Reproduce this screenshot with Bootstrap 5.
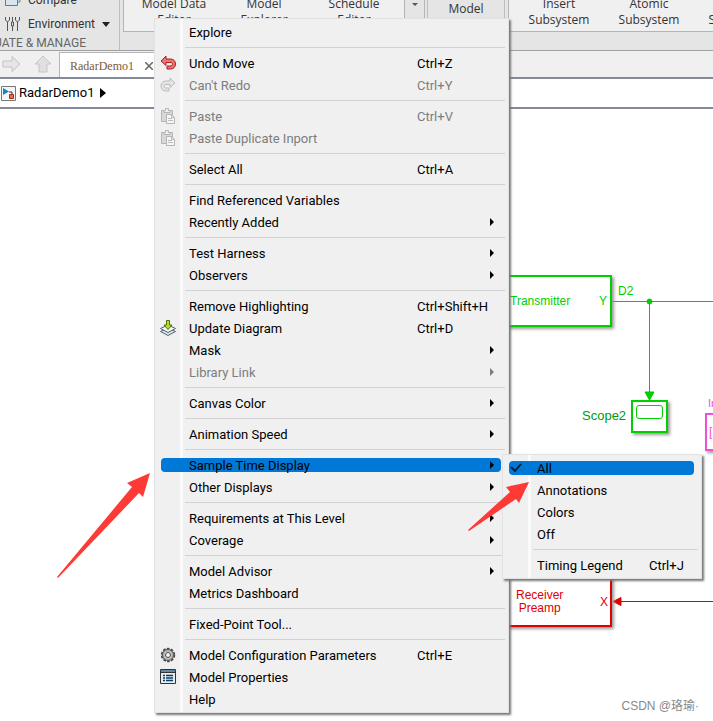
<!DOCTYPE html>
<html lang="en">
<head>
<meta charset="utf-8">
<meta name="viewport" content="width=device-width, initial-scale=1">
<title>RadarDemo1</title>
<link href="https://cdn.jsdelivr.net/npm/bootstrap@5.3.0/dist/css/bootstrap.min.css" rel="stylesheet">
<style>
body{font:13px/22px Roboto,"Open Sans",sans-serif;color:#000;background:#fff}
button{font:inherit;color:inherit;border:0;background:none;padding:0}
/* ribbon */
.ribbon{height:51px;background:#e5e5e5;border-bottom:1px solid #a0a0a0;font:12px/16px "Open Sans",sans-serif;color:#333}
.manage{width:120px;border-right:1px solid #bdbdbd}
.tool-row{height:24px;gap:7px}
.tool-label{font:12px/16px Roboto,sans-serif}
.group-title{height:14px;font:12px/14px Roboto,sans-serif;color:#666;padding-right:33px}
.gallery{height:32px;background:#f0f0f0;border:1px solid #b4b4b4;border-top:0}
.gallery button{width:90px;height:24px;white-space:nowrap}
.gallery.first{margin-left:3px;padding-left:5px}
.gallery .scroller{width:20px;height:31px;margin-left:5px;background:#e5e5e5;border-left:1px solid #b4b4b4}
.gallery .stacked{margin-top:-4px;height:32px}
.model-cell{width:78px;height:32px;margin-left:2px;border:1px solid #bdbdbd;border-top:0;border-bottom:0;padding-bottom:15px}
.gallery.second{margin-left:3px;padding-left:5px;border-right:0}
/* document tabs and path */
.tabs-bar{height:28px;background:#f0f0f0;border-bottom:2px solid #858b94}
.nav-icons{width:59px;gap:12px;padding-left:2px}
.doc-tab{width:110px;height:25px;gap:11px;background:#fff;border:1px solid #b5b5b5;border-bottom:0;padding:2px 0 0 10px;color:#7a5b35;font:12px/22px "Liberation Serif",serif}
.path-bar{height:30px;border-bottom:2px solid #85889a;gap:2px}
/* model canvas */
.sheet{min-height:612px;overflow:hidden;font:12px/13px "Liberation Sans",Arial,sans-serif}
.sheet svg.wires{left:0;top:0;width:100%;height:100%}
.block{background:#fff;border:2px solid;box-shadow:2px 2px 3px #999}
.tag{white-space:nowrap}
.green{color:#00d000}.red{color:#e00000}.pink{color:#f050d8}
.transmitter{left:480px;top:166px;width:132px;height:52px;padding:1px 3px 0 28px}
.receiver{left:480px;top:450px;width:132px;height:68px;padding:18px 2px 0 34px}
.scope{left:631px;top:291px;width:37px;height:33px;padding:3px}
.scope-screen{height:14px;border:1px solid;border-radius:3px}
.inport{left:705px;top:304px;width:60px;height:38px;padding:11px 2px}
.tag-d2{left:618px;top:176px}.tag-scope{left:582px;top:300px;color:#009a10;font-size:13px}.tag-in{left:708px;top:288px;font-size:11px}
.mark-csdn{right:14px;bottom:7px;color:#888;font:12px/16px "Liberation Sans","Noto Sans CJK SC",sans-serif}
/* menus */
.ctx{display:flex;flex-direction:column;background:linear-gradient(90deg,#f0f0f0 0 25px,#fafafa 25px 28px,#f0f0f0 28px);border:1px solid #e2e2e2;padding:2px;box-shadow:2px 2px 2px #777}
.ctx-main{left:154px;top:18px;width:355px}
.ctx-sub{left:502px;top:454px;width:200px}
.ctx-row{display:flex;align-items:center;height:22px;margin:0 5px 0 4px;text-align:left;white-space:nowrap}
.ctx-row span:not(.ctx-icon){padding-top:2px}
.ctx-row.hot{height:14px;margin-top:4px;margin-bottom:4px;background:#0078d7;border-radius:4px}
.ctx-row.off{color:#7d7d7d}
.ctx-icon{width:28px;flex:none;display:flex}
.ctx-icon svg{margin-left:-1px}
.ctx-label{width:228px}
.ctx-sub .ctx-label{width:112px}
.ctx-more{width:0;height:0;border:4px solid transparent;border-left-color:currentColor;border-right:0;margin-left:auto;margin-right:7px}
.ctx-line{height:1px;background:#d2d2d2;margin:4px 1px 4px 28px;border:0;opacity:1}
.pointer{left:0;top:0;pointer-events:none}
</style>
<script src="https://cdn.jsdelivr.net/npm/bootstrap@5.3.0/dist/js/bootstrap.bundle.min.js" defer></script>
</head>
<body class="position-relative d-flex flex-column min-vh-100 overflow-hidden">
<header>
  <div class="ribbon d-flex overflow-hidden">
    <section class="manage flex-shrink-0 d-flex flex-column justify-content-end overflow-hidden">
      <button class="tool-row tool-label d-flex align-items-center flex-shrink-0 ps-1"><svg width="17" height="16"><path d="M5 1h11v9H5z" fill="#c8dceb" stroke="#789"/><path d="M1.500 7.500h12v6h-12z" fill="#d8e4ee" stroke="#777"/></svg>Compare</button>
      <button class="tool-row tool-label d-flex align-items-center flex-shrink-0 ps-1"><svg width="17" height="16" fill="none" stroke="#555"><path d="M3.500 6v9M8.500 1v5M8.500 10v5M13.500 6v9M1.500 1v3l2 2 2-2V1M7.500 6h2v4h-2zM11.500 1v3l2 2 2-2V1"/></svg>Environment<svg width="8" height="5"><path d="M0 0h8L4 5z" fill="#222"/></svg></button>
      <div class="group-title d-flex justify-content-end flex-shrink-0 text-nowrap">EVALUATE &amp; MANAGE</div>
    </section>
    <div class="gallery first d-flex flex-shrink-0">
      <button class="stacked">Model Data<br>Editor</button><button class="stacked">Model<br>Explorer</button><button class="stacked">Schedule<br>Editor</button>
      <button class="scroller" aria-label="More"><svg width="8" height="26" class="d-block mx-auto"><path d="M1 0h6L4 3z" fill="#555"/></svg></button>
    </div>
    <button class="model-cell flex-shrink-0">Model</button>
    <div class="gallery second d-flex flex-grow-1">
      <button class="stacked flex-shrink-0">Insert<br>Subsystem</button><button class="stacked flex-shrink-0">Atomic<br>Subsystem</button><button class="stacked flex-shrink-0">Variant<br>Subsystem</button>
    </div>
  </div>
  <div class="tabs-bar d-flex align-items-end">
    <div class="nav-icons d-flex align-items-center align-self-center">
      <svg width="20" height="18"><path d="M1 6h9V1.500L18 9l-8 7.500V12H1z" fill="#e6e6e6" stroke="#c2c2c2"/></svg>
      <svg width="18" height="18"><path d="M9 1l8 8h-4v8H5V9H1z" fill="#e0e0e0" stroke="#c6c6c6"/></svg>
    </div>
    <div class="doc-tab d-flex align-items-center"><span>RadarDemo1</span><button aria-label="Close tab"><svg width="8" height="8" class="d-block" stroke="#666" stroke-width="1.500"><path d="M0 0l8 8M8 0L0 8"/></svg></button></div>
  </div>
  <nav class="path-bar d-flex align-items-center" aria-label="Model path">
    <svg width="17" height="17"><path d="M1.500 1.500h14v14h-14z" fill="#f4f6f8" stroke="#777"/><path d="M3 3l6 3.500L3 10z" fill="#1683c5"/><path d="M9 7h3v3" fill="none" stroke="#333"/><path d="M9.500 9.500h4v4h-4z" fill="#ed713b" stroke="#a42c10"/></svg>
    <a href="#" class="text-reset text-decoration-none">RadarDemo1</a>
    <svg width="6" height="10" class="ms-1"><path d="M0 0l6 5-6 5z"/></svg>
  </nav>
</header>
<main class="sheet position-relative flex-grow-1">
  <svg class="wires position-absolute">
    <g stroke="#00c800" fill="#00d000"><path d="M649.500 192v92" fill="none"/><line x1="612" y1="192.500" x2="100%" y2="192.500"/><circle cx="649.500" cy="192.500" r="2.500"/><path d="M645 283h9l-4.500 8z"/></g>
    <g stroke="#e00000" fill="#e00000"><line x1="614" y1="492.500" x2="100%" y2="492.500"/><path d="M613 492.500l8-4v8z"/></g>
  </svg>
  <div class="block transmitter green position-absolute d-flex align-items-center justify-content-between"><span>Transmitter</span><span>Y</span></div>
  <span class="tag tag-d2 green position-absolute">D2</span>
  <span class="tag tag-scope position-absolute">Scope2</span>
  <div class="block scope green position-absolute"><div class="scope-screen"></div></div>
  <span class="tag tag-in pink position-absolute">In1</span>
  <div class="block inport pink position-absolute">[1]</div>
  <div class="block receiver red position-absolute d-flex align-items-center justify-content-between"><span class="text-center">Receiver<br>Preamp</span><span>X</span></div>
  <div class="mark-csdn position-absolute">CSDN @珞瑜·</div>
</main>

<div class="ctx ctx-main position-absolute" role="menu" aria-label="Canvas">
  <button class="ctx-row" role="menuitem"><span class="ctx-icon"></span><span class="ctx-label">Explore</span></button>
  <hr class="ctx-line">
  <button class="ctx-row" role="menuitem"><span class="ctx-icon"><svg width="16" height="16"><path d="M1 6l5-5v3h4.500c3 0 5 2 5 5s-2 5-5 5H7v-3h3c1.500 0 2.500-.7 2.500-2S11.500 7.500 10 7.500H6v3z" fill="#ec7770" stroke="#a81d20"/></svg></span><span class="ctx-label">Undo Move</span><span>Ctrl+Z</span></button>
  <button class="ctx-row off" role="menuitem"><span class="ctx-icon"><svg width="16" height="16"><path d="M15 6l-5-5v3H6C3 4 1 6 1 9s2 5 5 5h3v-3H6c-1.500 0-2-.7-2-2s.7-1.500 2-1.500h4v3z" fill="#e4e4e4" stroke="#bcbcbc"/></svg></span><span class="ctx-label">Can't Redo</span><span>Ctrl+Y</span></button>
  <hr class="ctx-line">
  <button class="ctx-row off" role="menuitem"><span class="ctx-icon"><svg width="16" height="16"><path d="M1.500 2.500h11v11h-11z" fill="#d8d8d8" stroke="#b5b5b5"/><path d="M4 4.500v-2h1.500v-2h3v2H10v2z" fill="#eee" stroke="#b5b5b5"/><path d="M6.500 6.500h5l3 3v6h-8z" fill="#f6f6f6" stroke="#b5b5b5"/><path d="M8 10.500h4M8 12.500h5M11.500 7v2.500H14" fill="none" stroke="#bbb"/></svg></span><span class="ctx-label">Paste</span><span>Ctrl+V</span></button>
  <button class="ctx-row off" role="menuitem"><span class="ctx-icon"><svg width="16" height="16"><path d="M1.500 2.500h11v11h-11z" fill="#d8d8d8" stroke="#b5b5b5"/><path d="M4 4.500v-2h1.500v-2h3v2H10v2z" fill="#eee" stroke="#b5b5b5"/><path d="M6.500 6.500h5l3 3v6h-8z" fill="#f6f6f6" stroke="#b5b5b5"/><path d="M8 10.500h4M8 12.500h5M11.500 7v2.500H14" fill="none" stroke="#bbb"/></svg></span><span class="ctx-label">Paste Duplicate Inport</span></button>
  <hr class="ctx-line">
  <button class="ctx-row" role="menuitem"><span class="ctx-icon"></span><span class="ctx-label">Select All</span><span>Ctrl+A</span></button>
  <hr class="ctx-line">
  <button class="ctx-row" role="menuitem"><span class="ctx-icon"></span><span class="ctx-label">Find Referenced Variables</span></button>
  <button class="ctx-row" role="menuitem"><span class="ctx-icon"></span><span class="ctx-label">Recently Added</span><i class="ctx-more"></i></button>
  <hr class="ctx-line">
  <button class="ctx-row" role="menuitem"><span class="ctx-icon"></span><span class="ctx-label">Test Harness</span><i class="ctx-more"></i></button>
  <button class="ctx-row" role="menuitem"><span class="ctx-icon"></span><span class="ctx-label">Observers</span><i class="ctx-more"></i></button>
  <hr class="ctx-line">
  <button class="ctx-row" role="menuitem"><span class="ctx-icon"></span><span class="ctx-label">Remove Highlighting</span><span>Ctrl+Shift+H</span></button>
  <button class="ctx-row" role="menuitem"><span class="ctx-icon"><svg width="16" height="16"><path d="M.5 11.500L8 8l7.500 3.500L8 15.500z" fill="#dce4ea" stroke="#50606e"/><path d="M.5 8.500L8 5l7.500 3.500L8 12.500z" fill="#f4f7f9" stroke="#50606e"/><path d="M6.500.5h3V5H12L8 9.500 4 5h2.500z" fill="#b6dc32" stroke="#4d7100"/></svg></span><span class="ctx-label">Update Diagram</span><span>Ctrl+D</span></button>
  <button class="ctx-row" role="menuitem"><span class="ctx-icon"></span><span class="ctx-label">Mask</span><i class="ctx-more"></i></button>
  <button class="ctx-row off" role="menuitem"><span class="ctx-icon"></span><span class="ctx-label">Library Link</span><i class="ctx-more"></i></button>
  <hr class="ctx-line">
  <button class="ctx-row" role="menuitem"><span class="ctx-icon"></span><span class="ctx-label">Canvas Color</span><i class="ctx-more"></i></button>
  <hr class="ctx-line">
  <button class="ctx-row" role="menuitem"><span class="ctx-icon"></span><span class="ctx-label">Animation Speed</span><i class="ctx-more"></i></button>
  <hr class="ctx-line">
  <button class="ctx-row hot" role="menuitem" aria-expanded="true"><span class="ctx-icon"></span><span class="ctx-label">Sample Time Display</span><i class="ctx-more"></i></button>
  <button class="ctx-row" role="menuitem"><span class="ctx-icon"></span><span class="ctx-label">Other Displays</span><i class="ctx-more"></i></button>
  <hr class="ctx-line">
  <button class="ctx-row" role="menuitem"><span class="ctx-icon"></span><span class="ctx-label">Requirements at This Level</span><i class="ctx-more"></i></button>
  <button class="ctx-row" role="menuitem"><span class="ctx-icon"></span><span class="ctx-label">Coverage</span><i class="ctx-more"></i></button>
  <hr class="ctx-line">
  <button class="ctx-row" role="menuitem"><span class="ctx-icon"></span><span class="ctx-label">Model Advisor</span><i class="ctx-more"></i></button>
  <button class="ctx-row" role="menuitem"><span class="ctx-icon"></span><span class="ctx-label">Metrics Dashboard</span></button>
  <hr class="ctx-line">
  <button class="ctx-row" role="menuitem"><span class="ctx-icon"></span><span class="ctx-label">Fixed-Point Tool...</span></button>
  <hr class="ctx-line">
  <button class="ctx-row" role="menuitem"><span class="ctx-icon"><svg width="16" height="16" fill="none"><circle cx="8" cy="8" r="6.200" stroke="#444" stroke-width="2" stroke-dasharray="2.600 1.300"/><circle cx="8" cy="8" r="4.500" stroke="#b5b5b5" stroke-width="2.500"/><circle cx="8" cy="8" r="5.500" stroke="#555"/><circle cx="8" cy="8" r="2.500" fill="#f4f4f4" stroke="#444"/></svg></span><span class="ctx-label">Model Configuration Parameters</span><span>Ctrl+E</span></button>
  <button class="ctx-row" role="menuitem"><span class="ctx-icon"><svg width="16" height="16"><path d="M.5.5h15v14H.5z" fill="#e3edf6" stroke="#333"/><path d="M1 2h14" stroke="#5f87aa" stroke-width="2"/><path d="M1 3.500h14" stroke="#333"/><path d="M3 6.500h2M3 9h2M3 11.500h2M6 6.500h7M6 9h7M6 11.500h7" stroke="#123c64" stroke-width="1.300"/></svg></span><span class="ctx-label">Model Properties</span></button>
  <button class="ctx-row" role="menuitem"><span class="ctx-icon"></span><span class="ctx-label">Help</span></button>
</div>

<div class="ctx ctx-sub position-absolute" role="menu" aria-label="Sample Time Display">
  <button class="ctx-row hot" role="menuitemcheckbox" aria-checked="true"><span class="ctx-icon"><svg width="16" height="14"><path d="M3 6l4 4 6-7" fill="none" stroke="#111827" stroke-width="1.800"/></svg></span><span class="ctx-label">All</span></button>
  <button class="ctx-row" role="menuitem"><span class="ctx-icon"></span><span class="ctx-label">Annotations</span></button>
  <button class="ctx-row" role="menuitem"><span class="ctx-icon"></span><span class="ctx-label">Colors</span></button>
  <button class="ctx-row" role="menuitem"><span class="ctx-icon"></span><span class="ctx-label">Off</span></button>
  <hr class="ctx-line">
  <button class="ctx-row" role="menuitem"><span class="ctx-icon"></span><span class="ctx-label">Timing Legend</span><span>Ctrl+J</span></button>
</div>
<svg class="pointer position-absolute" width="540" height="600" fill="#fd3a36"><path d="M150 473l-23 10 5 4-75 90 1 1 81-85 4 4zM529 482l-23 5 4 5-42 38 1 1 47-32 3 4z"/></svg>
</body>
</html>
